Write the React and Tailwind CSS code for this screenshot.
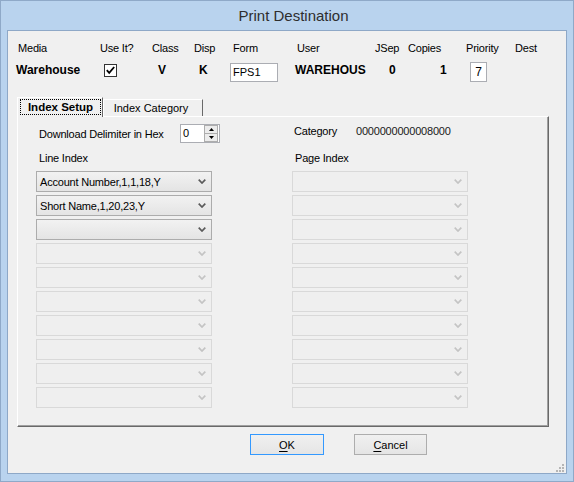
import React from "react";

const F = "font-['Liberation_Sans',Arial,sans-serif]";

function Chevron({ enabled }) {
  return (
    <svg width="8" height="5" viewBox="0 0 8 5" className="shrink-0">
      <path d="M0.7 0.7 L4 4 L7.3 0.7" fill="none" stroke={enabled ? "#5a5a5a" : "#c4c4c4"} strokeWidth="1.7" />
    </svg>
  );
}

function Combo({ text, enabled }) {
  return (
    <div
      className={
        "h-[21px] w-[176px] flex items-center justify-between pl-[3px] pr-[5px] border " +
        (enabled
          ? "border-[#acacac] bg-gradient-to-b from-[#f2f2f2] to-[#e4e4e4]"
          : "border-[#d9d9d9] bg-[#efefef]")
      }
    >
      <span className="text-[11px] tracking-[-0.2px] text-black leading-[14px] whitespace-nowrap">{text}</span>
      <Chevron enabled={enabled} />
    </div>
  );
}

function CheckBox() {
  return (
    <div className="w-[13px] h-[13px] border border-[#333333] bg-white flex items-center justify-center">
      <svg width="11" height="11" viewBox="0 0 11 11">
        <path d="M1.8 5.2 L4.2 7.8 L9.2 2" fill="none" stroke="#000" strokeWidth="1.8" />
      </svg>
    </div>
  );
}

function Spinner() {
  return (
    <div className="w-[40px] h-[19px] shrink-0 border border-[#abadb3] bg-white flex">
      <div className="flex-1 pl-[2px] text-[11px] leading-[17px] text-black">0</div>
      <div className="w-[15px] flex flex-col pr-[1px]">
        <div className="flex-1 border border-[#adadad] bg-[#ececec] flex items-center justify-center">
          <svg width="5" height="3" viewBox="0 0 5 3"><path d="M0 3 L2.5 0 L5 3 Z" fill="#000" /></svg>
        </div>
        <div className="flex-1 border border-t-0 border-[#adadad] bg-[#ececec] flex items-center justify-center">
          <svg width="5" height="3" viewBox="0 0 5 3"><path d="M0 0 L2.5 3 L5 0 Z" fill="#000" /></svg>
        </div>
      </div>
    </div>
  );
}

function Grip() {
  const dots = [
    [6, 0], [6, 3], [3, 3], [6, 6], [3, 6], [0, 6],
  ];
  return (
    <svg width="8" height="8" viewBox="0 0 8 8" className="absolute right-[2px] bottom-[1px]">
      {dots.map(([x, y], i) => (
        <rect key={i} x={x} y={y} width="2" height="2" fill="#b5b5b5" />
      ))}
    </svg>
  );
}

export default function App() {
  const left = [
    { t: "Account Number,1,1,18,Y", e: true },
    { t: "Short Name,1,20,23,Y", e: true },
    { t: "", e: true },
    ...Array.from({ length: 7 }, () => ({ t: "", e: false })),
  ];
  const right = Array.from({ length: 10 }, () => ({ t: "", e: false }));

  return (
    <div className={"w-[574px] h-[482px] bg-[#b9d3ee] border border-[#8fa9c8] flex flex-col " + F}>
      {/* title bar */}
      <div className="h-[29px] flex items-center justify-center pl-[13px] pt-[1px]">
        <span className="text-[15px] text-[#2e2e2e]">Print Destination</span>
      </div>
      {/* client */}
      <div className="ml-[6px] w-[560px] h-[444px] border border-[#8ea8c7] bg-[#f0f0f0] relative text-black">
        {/* header labels */}
        <div className="pt-[10px] flex text-[11px] tracking-[-0.2px] leading-[14px] pl-[10px] whitespace-nowrap">
          <div className="w-[82px]">Media</div>
          <div className="w-[52px]">Use It?</div>
          <div className="w-[42px]">Class</div>
          <div className="w-[39px]">Disp</div>
          <div className="w-[64px]">Form</div>
          <div className="w-[78px]">User</div>
          <div className="w-[33px]">JSep</div>
          <div className="w-[58px]">Copies</div>
          <div className="w-[49px]">Priority</div>
          <div>Dest</div>
        </div>
        {/* header values */}
        <div className="mt-[7px] h-[20px] flex items-start pl-[8px] whitespace-nowrap">
          <div className="w-[88px] mt-[1px] text-[12px] font-bold leading-[14px]">Warehouse</div>
          <div className="w-[54px] mt-[2px]"><CheckBox /></div>
          <div className="w-[41px] mt-[1px] text-[12px] font-bold leading-[14px]">V</div>
          <div className="w-[31px] mt-[1px] text-[12px] font-bold leading-[14px]">K</div>
          <div className="w-[65px]">
            <div className="mt-[1px] w-[48px] h-[19px] border border-[#abadb3] bg-white pl-[2px] text-[11px] leading-[17px]">FPS1</div>
          </div>
          <div className="w-[94px] mt-[1px] text-[12px] font-bold leading-[14px]">WAREHOUS</div>
          <div className="w-[51px] mt-[1px] text-[12px] font-bold leading-[14px]">0</div>
          <div className="w-[30px] mt-[1px] text-[12px] font-bold leading-[14px]">1</div>
          <div className="w-[17px] h-[20px] border border-[#abadb3] bg-white text-[12px] leading-[18px] text-center">7</div>
        </div>

        {/* tabs */}
        <div className="ml-[9px] mt-[15px] w-[532px]">
          <div className="h-[19px] flex items-end relative z-10">
            <div className="w-[86px] h-[20px] -mb-[1px] border-l border-t border-white border-r border-r-[#696969] bg-[#f0f0f0] pt-[1px] pl-[2px] pr-[1px]">
              <div className="h-[16px] border border-dotted border-black flex items-center justify-center text-[11.5px] font-bold leading-[14px]">
                Index Setup
              </div>
            </div>
            <div className="w-[100px] h-[17px] border-l border-t border-white border-r border-r-[#696969] flex items-center justify-center pr-[4px] text-[11px] leading-[14px]">
              Index Category
            </div>
          </div>
          {/* panel */}
          <div className="h-[311px] border-l border-t border-white border-r border-b border-r-[#696969] border-b-[#696969]">
            <div className="h-full border-r border-b border-[#a0a0a0] pt-[7px]">
              <div className="flex">
                {/* left column */}
                <div className="ml-[18px] w-[176px] flex flex-col">
                  <div className="h-[19px] flex items-center pl-[3px]">
                    <span className="w-[141px] shrink-0 text-[11px] tracking-[-0.2px] leading-[14px] whitespace-nowrap">Download Delimiter in Hex</span>
                    <Spinner />
                  </div>
                  <div className="mt-[8px] h-[14px] pl-[3px] text-[11px] tracking-[-0.2px] leading-[14px]">Line Index</div>
                  <div className="mt-[6px] flex flex-col gap-[3px]">
                    {left.map((c, i) => (
                      <Combo key={i} text={c.t} enabled={c.e} />
                    ))}
                  </div>
                </div>
                {/* right column */}
                <div className="ml-[80px] w-[176px] flex flex-col">
                  <div className="h-[19px] flex items-start pl-[2px] text-[11px] tracking-[-0.2px] leading-[14px] whitespace-nowrap">
                    <span className="w-[62px] shrink-0">Category</span>
                    <span className="text-[#1a1a1a]">0000000000008000</span>
                  </div>
                  <div className="mt-[8px] h-[14px] pl-[3px] text-[11px] tracking-[-0.2px] leading-[14px]">Page Index</div>
                  <div className="mt-[6px] flex flex-col gap-[3px]">
                    {right.map((c, i) => (
                      <Combo key={i} text={c.t} enabled={c.e} />
                    ))}
                  </div>
                </div>
              </div>
            </div>
          </div>
        </div>

        {/* buttons */}
        <div className="mt-[7px] ml-[242px] flex gap-[30px]">
          <button className="w-[74px] h-[21px] border border-[#3399ff] bg-gradient-to-b from-[#f0f0f0] to-[#e5e5e5] text-[11px] leading-[14px] flex items-center justify-center">
            <span><span className="underline underline-offset-2">O</span>K</span>
          </button>
          <button className="w-[73px] h-[21px] border border-[#adadad] bg-gradient-to-b from-[#f0f0f0] to-[#e5e5e5] text-[11px] leading-[14px] flex items-center justify-center">
            <span><span className="underline underline-offset-2">C</span>ancel</span>
          </button>
        </div>

        <Grip />
      </div>
    </div>
  );
}
